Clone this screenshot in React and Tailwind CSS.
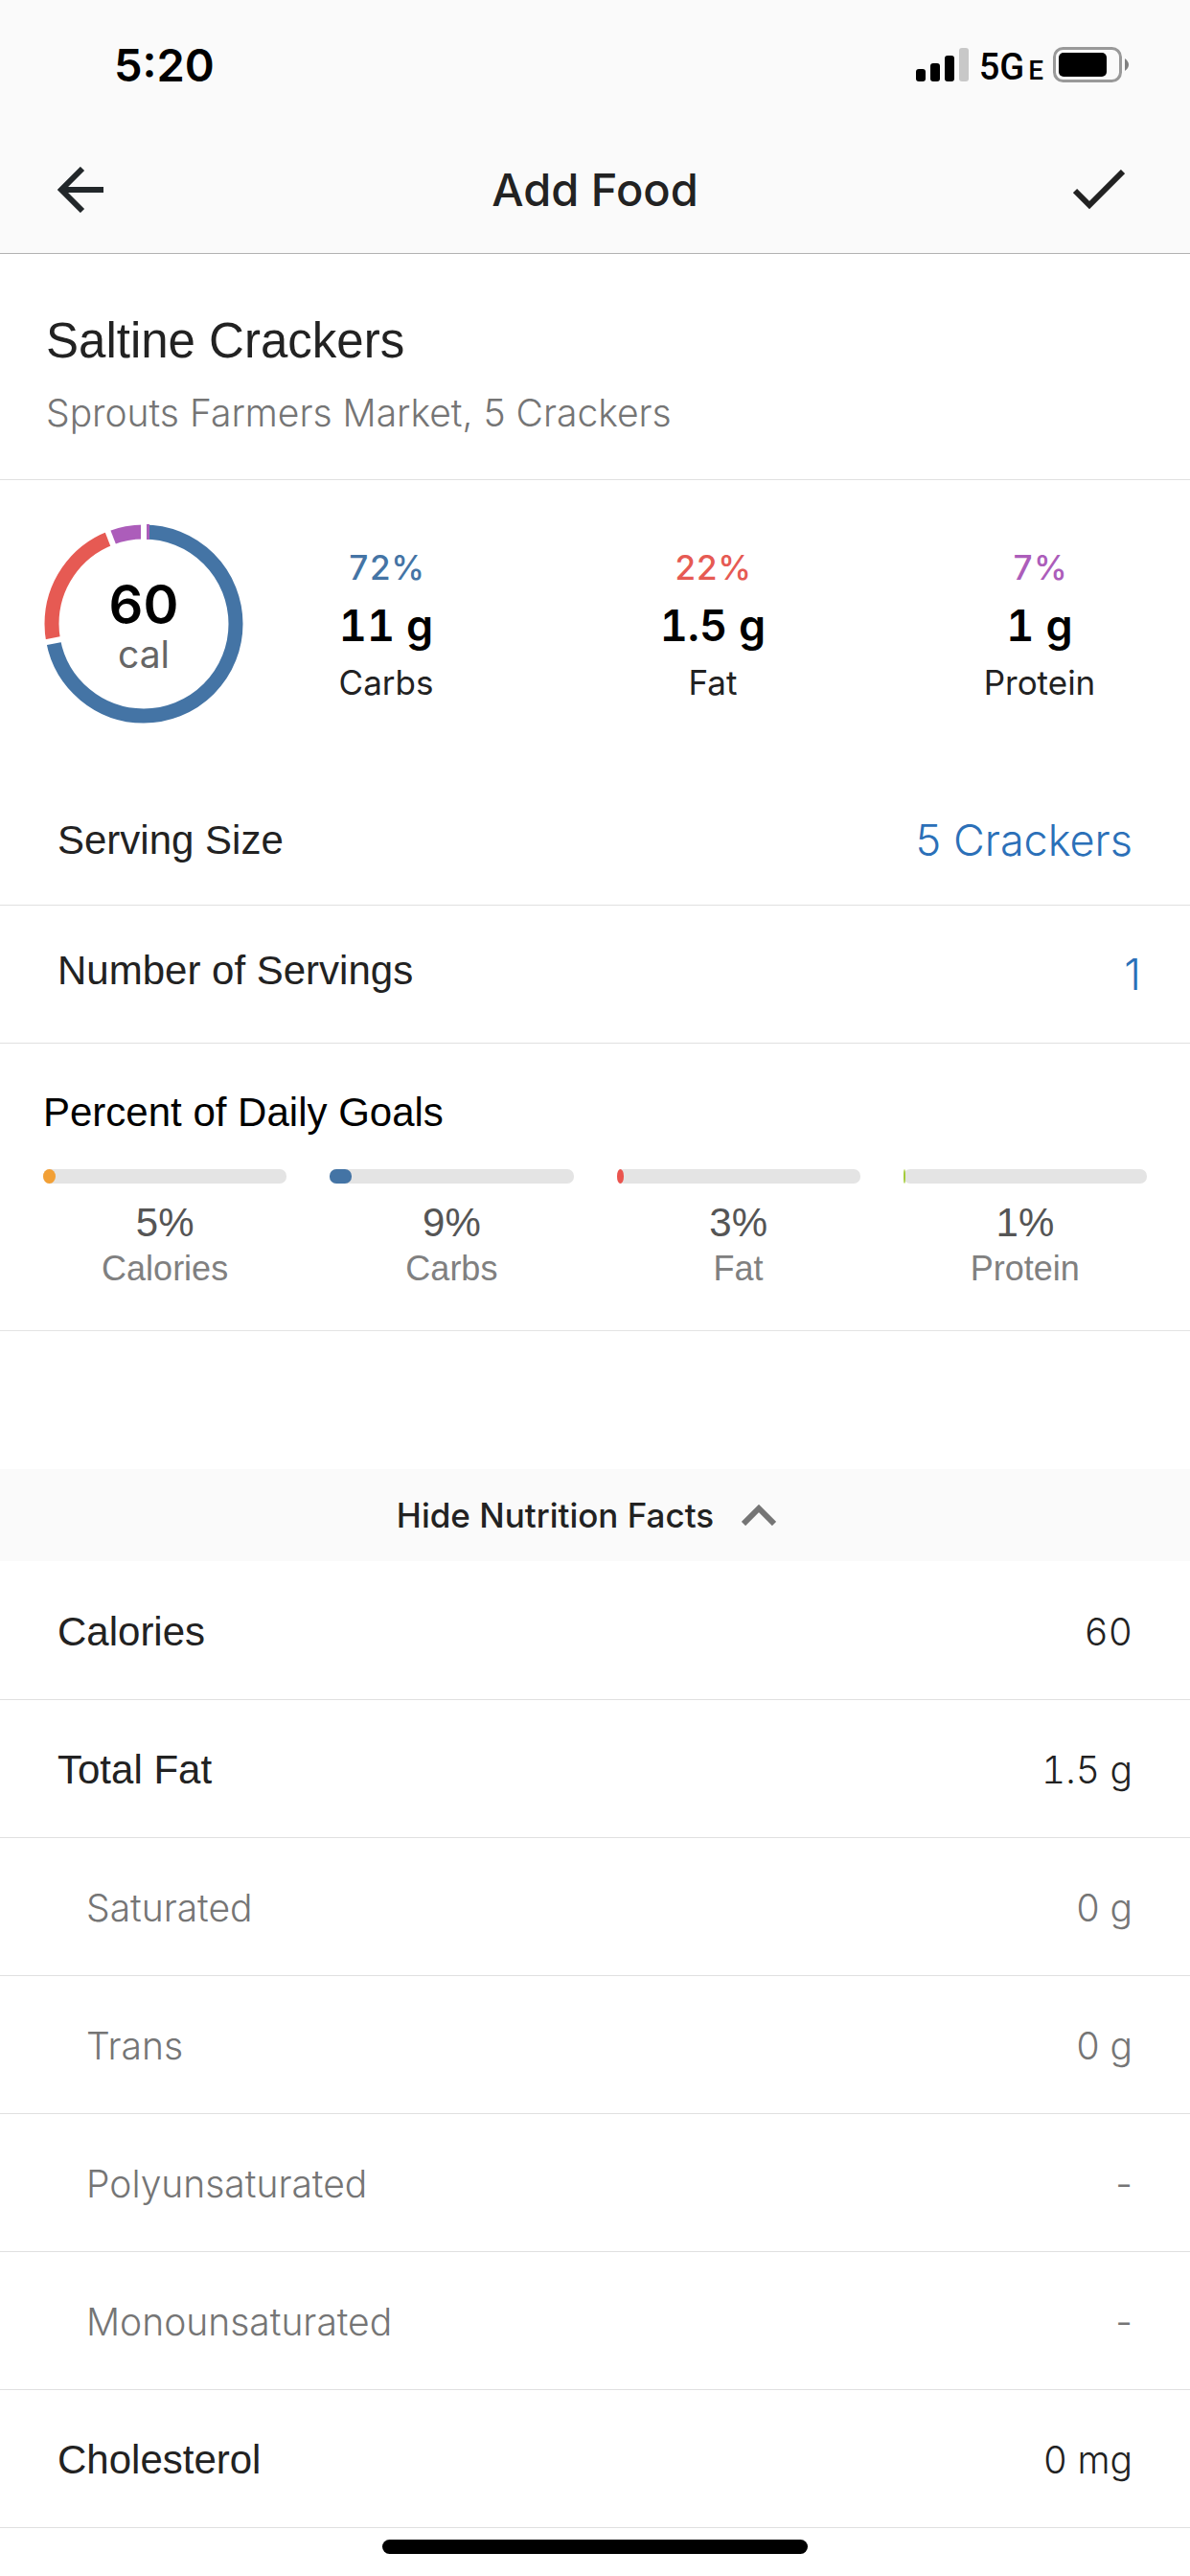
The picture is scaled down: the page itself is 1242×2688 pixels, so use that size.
import React, { useState } from "react";

const macros = [
  { label: "Carbs", percent: "72%", amount: "11 g", color: "text-[#4474a5]" },
  { label: "Fat", percent: "22%", amount: "1.5 g", color: "text-[#e65a53]" },
  { label: "Protein", percent: "7%", amount: "1 g", color: "text-[#ac5dba]" },
];

const goals = [
  { label: "Calories", value: 5, fill: "bg-[#f2a036] rounded-[50%]" },
  { label: "Carbs", value: 9, fill: "bg-[#4474a5] rounded-[7px]" },
  { label: "Fat", value: 3, fill: "bg-[#ea544e] rounded-[50%]" },
  { label: "Protein", value: 1, fill: "bg-[#a3cb38] rounded-[50%]" },
];

const nutrients = [
  { label: "Calories", value: "60" },
  { label: "Total Fat", value: "1.5 g" },
  { label: "Saturated", value: "0 g", sub: true },
  { label: "Trans", value: "0 g", sub: true },
  { label: "Polyunsaturated", value: "-", sub: true },
  { label: "Monounsaturated", value: "-", sub: true },
  { label: "Cholesterol", value: "0 mg" },
];

const StatusBar = () => (
  <div className="flex h-[132px] items-center justify-between pt-1 pr-[64px] pl-[119px] text-black">
    <span className="font-['Inter',sans-serif] text-[47px] font-semibold">5:20</span>
    <div className="flex items-center gap-[10px]">
      <svg width="56" height="36" viewBox="0 0 56 36">
        <rect x="0" y="22" width="10" height="13" rx="3" />
        <rect x="15" y="16" width="10" height="19" rx="3" />
        <rect x="30" y="8" width="10" height="27" rx="3" />
        <rect x="45" y="0" width="10" height="35" rx="3" fill="#c8c8c8" />
      </svg>
      <span className="flex items-baseline gap-1 pt-1 font-['Roboto',sans-serif] text-[38px] leading-none font-medium">
        5G <span className="text-[28px]">E</span>
      </span>
      <svg width="79" height="38" viewBox="0 0 79 38">
        <rect x="1.5" y="1.5" width="69" height="34" rx="9" fill="none" stroke="#999" strokeWidth="3" />
        <rect x="6" y="6" width="50" height="25" rx="5" />
        <path d="M75 12 Q79 15 79 18.5 Q79 22 75 25 Z" fill="#808080" />
      </svg>
    </div>
  </div>
);

const CalorieRing = () => (
  <div className="relative flex h-[208px] w-[208px] shrink-0 flex-col items-center justify-center pt-2 font-['Inter',sans-serif]">
    <svg className="absolute inset-0" viewBox="-104 -104 208 208" fill="none" strokeWidth="15">
      <g transform="rotate(-90)">
        <circle r="96" pathLength="360" stroke="#4474a5" strokeDasharray="259.4 360" />
        <circle r="96" pathLength="360" stroke="#e65a53" strokeDasharray="79.4 360" strokeDashoffset="-259.4" />
        <circle r="96" pathLength="360" stroke="#ac5dba" strokeDasharray="21.2 360" strokeDashoffset="-338.8" />
      </g>
      <path d="M4.5 -104 V-88" stroke="#ac5dba" strokeWidth="3" />
      <g stroke="#fff" strokeWidth="6">
        <path d="M0 -86 V-106" />
        <path d="M0 -86 V-106" transform="rotate(259.4)" />
        <path d="M0 -86 V-106" transform="rotate(338.8)" />
      </g>
    </svg>
    <span className="text-[56px] leading-[56px] font-semibold text-black">60</span>
    <span className="text-[39px] leading-[48px] text-[#666]">cal</span>
  </div>
);

const App = () => {
  const [servings, setServings] = useState("1");
  const [showFacts, setShowFacts] = useState(true);

  return (
    <div className="min-h-screen bg-white font-['Liberation_Sans',Arial,sans-serif] text-[42px] leading-[48px] text-[#222]">
      <header className="border-b border-[#b2b2b2] bg-[#fafafa]">
        <StatusBar />
        <div className="grid h-[132px] grid-cols-[1fr_auto_1fr] items-center px-[60px]">
          <button type="button" aria-label="Back" className="justify-self-start">
            <svg width="48" height="48" viewBox="0 0 48 48" fill="none" stroke="#22272a" strokeWidth="6">
              <path d="M26 2 L4 24 L26 46 M4 24 H48" />
            </svg>
          </button>
          <h1 className="font-['Inter',sans-serif] text-[47px] font-medium">Add Food</h1>
          <button type="button" aria-label="Save" className="justify-self-end pr-2">
            <svg width="54" height="42" viewBox="0 0 54 42" fill="none" stroke="#222" strokeWidth="6">
              <path d="M2 22 L17 37 L52 2" />
            </svg>
          </button>
        </div>
      </header>

      <section className="border-b border-[#e0e0e0] px-12 pt-[61px] pb-[42px]">
        <h2 className="text-[51px] leading-[60px]">Saltine Crackers</h2>
        <p className="mt-[18px] font-['Inter',sans-serif] text-[39px] leading-[54px] font-light text-[#757575]">
          Sprouts Farmers Market, 5 Crackers
        </p>
      </section>

      <section className="flex items-center gap-9 pt-[46px] pr-11 pb-[54px] pl-[46px]">
        <CalorieRing />
        <div className="grid flex-1 grid-cols-3 gap-[115px] text-center font-['Inter',sans-serif] tabular-nums">
          {macros.map((m) => (
            <div key={m.label} className="flex flex-col">
              <span className={`text-[35px] leading-[50px] font-medium ${m.color}`}>{m.percent}</span>
              <span className="text-[45px] leading-[72px] font-semibold text-black">{m.amount}</span>
              <span className="text-[35px] leading-[46px]">{m.label}</span>
            </div>
          ))}
        </div>
      </section>

      <section>
        <div className="flex h-[136px] items-center justify-between border-b border-[#e0e0e0] px-[60px]">
          <span>Serving Size</span>
          <button type="button" className="font-['Inter',sans-serif] text-[45px] font-light text-[#2b70b8]">
            5 Crackers
          </button>
        </div>
        <div className="flex h-[144px] items-center justify-between border-b border-[#e0e0e0] pr-[51px] pl-[60px]">
          <label htmlFor="servings" className="pb-2">
            Number of Servings
          </label>
          <input
            id="servings"
            type="text"
            inputMode="decimal"
            className="w-40 bg-transparent text-right font-['Inter',sans-serif] text-[45px] font-light text-[#2b70b8] outline-none"
            value={servings}
            onChange={(e) => setServings(e.target.value)}
          />
        </div>
      </section>

      <section className="border-b border-[#e4e4e4] px-[45px] pt-12 pb-10">
        <h3 className="text-black">Percent of Daily Goals</h3>
        <div className="mt-[35px] grid grid-cols-4 gap-[45px]">
          {goals.map((g) => (
            <div key={g.label} className="text-center">
              <div className="h-[15px] rounded-[7px] bg-[#e4e4e4]">
                <div className={`h-full ${g.fill}`} style={{ width: `${g.value}%` }} />
              </div>
              <div className="mt-[17px] leading-[48px] text-[#555]">{g.value}%</div>
              <div className="text-[36px] leading-[48px] text-[#808080]">{g.label}</div>
            </div>
          ))}
        </div>
      </section>

      <button
        type="button"
        aria-expanded={showFacts}
        onClick={() => setShowFacts(!showFacts)}
        className="mt-36 flex h-24 w-full items-center justify-center gap-[29px] bg-[#fafafa] pr-[18px] font-['Inter',sans-serif] text-[35px] font-medium"
      >
        {showFacts ? "Hide" : "Show"} Nutrition Facts
        <svg
          className={showFacts ? "" : "rotate-180"}
          width="36"
          height="22"
          viewBox="0 0 36 22"
          fill="none"
          stroke="#757575"
          strokeWidth="6"
        >
          <path d="M2 20 L18 4 L34 20" />
        </svg>
      </button>

      {showFacts && (
        <table className="w-full border-collapse">
          <tbody>
            {nutrients.map((n) => (
              <tr key={n.label} className="h-36 border-b border-[#e0e0e0]">
                <th
                  scope="row"
                  className={
                    n.sub
                      ? "pt-1 pl-[90px] text-left font-['Inter',sans-serif] text-[39px] font-light text-[#757575]"
                      : "pt-1 pl-[60px] text-left font-normal"
                  }
                >
                  {n.label}
                </th>
                <td
                  className={`pt-1 pr-[60px] text-right font-['Inter',sans-serif] text-[39px] font-light ${n.sub ? "text-[#757575]" : "tabular-nums"}`}
                >
                  {n.value}
                </td>
              </tr>
            ))}
          </tbody>
        </table>
      )}

      <div className="mx-auto mt-3 mb-5 h-[15px] w-[444px] rounded-full bg-black" />
    </div>
  );
};

export default App;
